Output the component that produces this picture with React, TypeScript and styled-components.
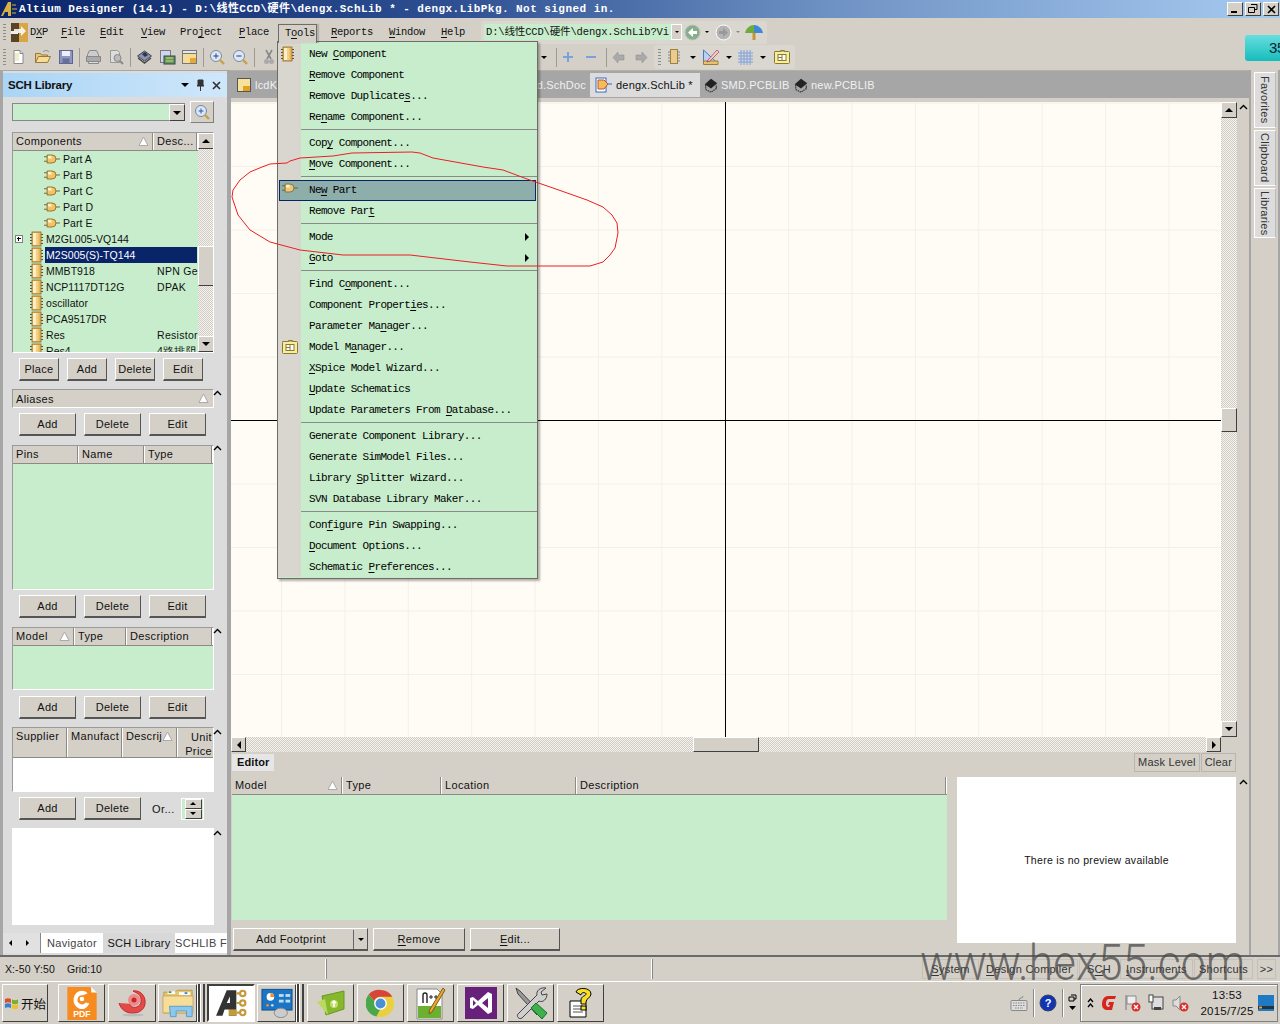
import React from "react";
import styled, { createGlobalStyle } from "styled-components";

const SANS = `"Liberation Sans", Arial, sans-serif`;
const MONO = `"Liberation Mono", "Noto Sans CJK SC", monospace`;
const FACE = "#d4d0c8";
const GREEN = "#c7edcc";
const GREY = "#a6a6a6";

const Global = createGlobalStyle`
  html, body { margin: 0; padding: 0; background: ${FACE}; }
  * { box-sizing: border-box; }
  u { text-underline-offset: 2px; }
`;

const Page = styled.div`
  width: 1280px; height: 1024px; position: relative; overflow: hidden;
  display: flex; flex-direction: column; background: ${FACE};
  font-family: ${SANS}; font-size: 11px; color: #111;
`;

/* ---------- title bar ---------- */
const TitleBar = styled.div`
  height: 18px; display: flex; align-items: center; flex: none;
  background: linear-gradient(90deg, #0a246a 0%, #2d4f92 35%, #6f92c4 65%, #a6caf0 100%);
`;
const TitleText = styled.span`
  margin-left: 1px; font: bold 11px/18px ${MONO}; color: #fff; letter-spacing: .45px; white-space: nowrap; flex: 1;
`;
const WinBtns = styled.div`display: flex; gap: 2px; padding: 0 1px 0 0;`;
const WinBtn = styled.div`
  width: 16px; height: 14px; background: ${FACE}; display: flex; align-items: center; justify-content: center;
  border: 1px solid; border-color: #fff #404040 #404040 #fff;
`;

/* ---------- menu bar & toolbar ---------- */
const MenuRow = styled.div`
  height: 26px; flex: none; display: flex; align-items: center; padding: 2px 0 0 3px; position: relative;
  font: 10.5px ${MONO}; letter-spacing: -.3px;
`;
const Grip = styled.div`
  width: 3px; height: 17px; flex: none;
  background: repeating-linear-gradient(180deg, #8f8c85 0 1px, transparent 1px 3px);
`;
const MenuItem = styled.span<{ $w: number }>`
  width: ${p => p.$w}px; height: 18px; line-height: 18px; flex: none; padding-left: 6px; white-space: nowrap;
`;
const DxpItem = styled(MenuItem)`padding-left: 2px;`;
const TopBtn = styled.span`
  width: 39px; height: 19px; line-height: 17px; flex: none; padding-left: 6px; align-self: flex-end; margin: 0 8px 1px 0;
  border: 1px solid #6f6c66; border-bottom: 0; background: ${FACE}; position: relative; z-index: 6;
  box-shadow: 2px 0 1px rgba(0,0,0,.15);
`;
const AddressGroup = styled.div`
  height: 23px; margin-left: 9px; width: 286px; flex: none; display: flex; align-items: center;
  background: #dad7d0; border-radius: 3px; padding-left: 3px;
`;
const AddressInput = styled.div`
  width: 187px; height: 16px; background: ${GREEN}; font: 10.5px/16px ${MONO}; letter-spacing: -.15px; padding-left: 2px;
  overflow: hidden; white-space: nowrap; flex: none;
`;
const ComboArrow = styled.div`
  width: 11px; height: 16px; background: ${FACE}; border: 1px solid #fff; display: flex; align-items: center; justify-content: center; flex: none;
`;
const Tri = styled.i<{ $dir?: "up" | "down" | "left" | "right"; $s?: number; $c?: string }>`
  display: inline-block; width: 0; height: 0; flex: none;
  ${p => {
    const s = p.$s ?? 3, c = p.$c ?? "#000";
    switch (p.$dir ?? "down") {
      case "up": return `border-left:${s}px solid transparent;border-right:${s}px solid transparent;border-bottom:${s}px solid ${c};`;
      case "left": return `border-top:${s}px solid transparent;border-bottom:${s}px solid transparent;border-right:${s}px solid ${c};`;
      case "right": return `border-top:${s}px solid transparent;border-bottom:${s}px solid transparent;border-left:${s}px solid ${c};`;
      default: return `border-left:${s}px solid transparent;border-right:${s}px solid transparent;border-top:${s}px solid ${c};`;
    }
  }}
`;
const ToolRow = styled.div`
  height: 26px; flex: none; display: flex; align-items: center; padding-left: 3px;
`;
const Gap = styled.span<{ $w: number }>`width: ${p => p.$w}px; flex: none; display: inline-block;`;
const Fill = styled.div`flex: 1;`;
const TSep = styled.span`
  width: 1px; height: 19px; background: #9e9b94; flex: none; margin: 0 5px;
`;
const ToolGroup = styled.div`
  height: 24px; width: 141px; display: flex; align-items: center; background: #dad7d0; border-radius: 3px; padding-left: 4px; flex: none;
`;
const Teal = styled.div`
  position: absolute; left: 1245px; top: 17px; width: 35px; height: 26px; border-radius: 3px 0 0 3px; overflow: hidden;
  background: linear-gradient(180deg, #67dede, #16bcbc); font: 15px/26px ${SANS}; padding-left: 24px; color: #123; z-index: 1;
`;

/* ---------- workspace ---------- */
const Workspace = styled.div`height: 885px; flex: none; display: flex; background: ${FACE};`;
const LeftDock = styled.aside`
  width: 231px; flex: none; display: flex; flex-direction: column;
  background: #dcdcdc; border-left: 3px solid ${GREY}; border-right: 4px solid ${GREY}; padding: 3px 0 0 0;
  box-shadow: inset 0 1px 0 ${GREY}; position: relative;
`;
const PanelHead = styled.div`
  height: 24px; flex: none; display: flex; align-items: center; padding: 0 6px 0 5px; gap: 7px;
  background: linear-gradient(90deg, #a9d5f6, #cfe7fb); font: bold 11.5px ${SANS}; letter-spacing: -.2px;
`;
const PanelTitle = styled.span`flex: 1;`;
const PanelBody = styled.div`padding: 3px 9px 0 9px; flex: 1; min-height: 0; display: flex; flex-direction: column; position: relative;`;
const SearchRow = styled.div`display: flex; align-items: center; height: 24px; gap: 5px; flex: none;`;
const SearchCombo = styled.div`
  width: 173px; height: 18px; background: ${GREEN}; border: 1px solid #888; border-right: 0; display: flex; justify-content: flex-end;
`;
const ComboBtn = styled.div`
  width: 16px; height: 17px; background: ${FACE}; display: flex; align-items: center; justify-content: center;
  border: 1px solid; border-color: #fff #404040 #404040 #fff;
`;
const IconBtn = styled.div`
  width: 24px; height: 22px; background: ${FACE}; display: flex; align-items: center; justify-content: center;
  border: 1px solid; border-color: #fff #808080 #808080 #fff;
`;
const TableBox = styled.div<{ $h: number; $mt: number; $bg?: string }>`
  width: 202px; height: ${p => p.$h}px; margin-top: ${p => p.$mt}px; flex: none; position: relative;
  background: ${p => p.$bg ?? GREEN}; border: 1px solid #fff; border-top-color: #9a9a9a; border-left-color: #9a9a9a;
  display: flex; flex-direction: column; overflow: hidden;
`;
const THead = styled.div<{ $h?: number }>`
  height: ${p => p.$h ?? 18}px; flex: none; display: flex; background: ${FACE};
  border-bottom: 1px solid #8d8a84;
  letter-spacing: .35px; font-size: 11px;
`;
const TH = styled.div<{ $w: number; $right?: boolean }>`
  width: ${p => p.$w}px; flex: none; padding: 0 0 0 3px; line-height: 17px; position: relative; overflow: hidden; white-space: pre-line;
  border-right: 1px solid #fff; box-shadow: inset -1px 0 0 #8d8a84; text-align: ${p => (p.$right ? "right" : "left")};
  ${p => p.$right ? "line-height: 14px; padding: 2px 2px 0 0; border-right: 0; box-shadow: none;" : ""}
`;
const SortMark = styled.svg`position: absolute; right: 4px; top: 3px;`;
const TreeWrap = styled.div`position: relative; flex: 1; overflow: hidden; display: flex;`;
const TreeList = styled.div`width: 185px; flex: none; overflow: hidden;`;
const VBar = styled.div`
  width: 16px; flex: none; display: flex; flex-direction: column;
  background: repeating-conic-gradient(#d0ccc4 0 25%, #f4f3f0 0 50%) 0 0 / 2px 2px;
`;
const ArrowCell = styled.div<{ $size?: number }>`
  width: ${p => p.$size ?? 16}px; height: ${p => p.$size ?? 16}px; flex: none; background: ${FACE}; display: flex; align-items: center; justify-content: center;
  border: 1px solid; border-color: #fff #404040 #404040 #fff;
`;
const VThumb = styled.div<{ $top: number; $h: number }>`
  width: 16px; height: ${p => p.$h}px; margin-top: ${p => p.$top}px; flex: none; background: ${FACE};
  border: 1px solid; border-color: #fff #404040 #404040 #fff;
`;
const TreeRow = styled.div<{ $indent: number }>`
  height: 16px; display: flex; align-items: center; padding-left: ${p => p.$indent}px; position: relative;
  white-space: nowrap; font-size: 10.5px; letter-spacing: .05px;
`;
const RowLabel = styled.span<{ $sel?: boolean; $w: number }>`
  width: ${p => p.$w}px; flex: none; height: 16px; line-height: 16px; padding-left: 1px; margin-left: 2px;
  ${p => (p.$sel ? "background:#0a246a;color:#fff;" : "")}
`;
const RowDesc = styled.span`position: absolute; left: 144px; top: 0; line-height: 16px; letter-spacing: .3px; width: 41px; overflow: hidden;`;
const Expander = styled.span`
  position: absolute; left: 2px; top: 4px; width: 8px; height: 8px; border: 1px solid #808080; background: #fff;
  &::before { content: ""; position: absolute; left: 1px; top: 2px; width: 4px; height: 1px; background: #000; }
  &::after { content: ""; position: absolute; left: 2px; top: 1px; width: 1px; height: 4px; background: #000; }
`;
const BtnRow = styled.div<{ $mt: number }>`
  display: flex; margin-top: ${p => p.$mt}px; gap: 8px; padding-left: 7px; flex: none; align-items: center; height: 23px;
`;
const Btn = styled.div<{ $w: number; $h?: number }>`
  width: ${p => p.$w}px; height: ${p => p.$h ?? 23}px; flex: none; background: ${FACE}; text-align: center;
  line-height: ${p => (p.$h ?? 23) - 3}px; font-size: 11px; letter-spacing: .3px;
  border-top: 1px solid #fff; border-left: 1px solid #fff; border-right: 1px solid #555; border-bottom: 2px solid #555; white-space: nowrap;
`;
const SplitBtn = styled(Btn)`display: flex; padding-left: 22px; align-items: center; justify-content: space-between;`;
const SplitArrow = styled.span`width: 14px; height: 19px; border-left: 1px solid #666; display: flex; align-items: center; justify-content: center;`;
const Aliases = styled.div`
  width: 202px; height: 19px; margin-top: 8px; flex: none; background: ${FACE}; border: 1px solid #fff; border-top-color: #9a9a9a; border-left-color: #9a9a9a;
  padding-left: 3px; line-height: 18px; letter-spacing: .35px; position: relative;
`;
const Chevron = styled.svg<{ $l: number; $t: number }>`position: absolute; left: ${p => p.$l}px; top: ${p => p.$t}px;`;
const OrderLabel = styled.span`margin-left: 3px; letter-spacing: .4px;`;
const Stepper = styled.div`
  width: 23px; height: 22px; background: ${GREEN}; border: 1px solid #fff; margin-left: -2px; padding-left: 3px; display: flex; flex-direction: column;
`;
const StepCell = styled.div`
  width: 17px; height: 10px; background: ${FACE}; display: flex; align-items: center; justify-content: center; border: 1px solid; border-color: #fff #404040 #404040 #fff;
`;
const PreviewSmall = styled.div`width: 202px; height: 97px; margin-top: 8px; flex: none; background: #fff;`;
const DockTabs = styled.div`
  height: 20px; margin-top: 8px; flex: none; display: flex; align-items: stretch; width: 224px; margin-left: -9px;
  background: #e1e1e1; overflow: hidden; font-size: 11px; letter-spacing: .3px;
`;
const DockNav = styled.div`width: 38px; flex: none; display: flex; align-items: center; gap: 14px; padding-left: 6px; border-right: 1px solid #888;`;
const DockTab = styled.div<{ $w: number; $on?: boolean }>`
  width: ${p => p.$w}px; flex: none; text-align: center; line-height: 20px; white-space: nowrap; overflow: hidden;
  background: ${p => (p.$on ? "#d8d8d8" : "#fff")}; color: ${p => (p.$on ? "#111" : "#444")};
`;

/* center */
const Center = styled.main`width: 1018px; flex: none; display: flex; flex-direction: column; position: relative;`;
const TabStrip = styled.div`
  height: 28px; flex: none; background: ${GREY}; display: flex; align-items: flex-end; font-size: 11px; color: #f1f1f1; letter-spacing: .2px;
  border-top: 1px solid #b4b1aa; padding-bottom: 1px;
`;
const DocTab = styled.div<{ $w: number; $on?: boolean; $ml?: number; $end?: boolean }>`
  width: ${p => p.$w}px; height: 24px; flex: none; display: flex; align-items: center; gap: 3px; padding-left: 5px; margin-left: ${p => p.$ml ?? 0}px; white-space: nowrap; overflow: hidden;
  ${p => (p.$on ? "background:#dcdcdc;color:#111;" : "")}
  ${p => (p.$end ? "justify-content:flex-end;padding-right:2px;" : "")}
  svg { flex: none; }
`;
const FirstTab = styled(DocTab)`padding-left: 6px; gap: 4px;`;
const PcbTab = styled(DocTab)`padding-left: 3px; gap: 2px;`;
const CanvasRow = styled.div`height: 635px; flex: none; display: flex; margin-top: 4px;`;
const Canvas = styled.div`
  flex: none; width: 990px; height: 635px; position: relative; overflow: hidden; background-color: #fffcf5;
  background-image:
    linear-gradient(90deg, #f3f0e8 1px, transparent 1px),
    linear-gradient(180deg, #f3f0e8 1px, transparent 1px);
  background-size: 63.4px 63.5px;
  background-position: 50px 0.5px;
`;
const CrossV = styled.div`position: absolute; left: 494px; top: 0; bottom: 0; width: 1px; background: #000;`;
const CrossH = styled.div`position: absolute; top: 318px; left: 0; right: 0; height: 1px; background: #000;`;
const HBarRow = styled.div`height: 15px; width: 990px; flex: none; display: flex; align-items: center;
  background: repeating-conic-gradient(#d0ccc4 0 25%, #f4f3f0 0 50%) 0 0 / 2px 2px;
`;
const HThumb = styled.div`width: 66px; height: 15px; margin-left: 447px; background: ${FACE}; border: 1px solid; border-color: #fff #404040 #404040 #fff; flex: none;`;
const EditorHead = styled.div`height: 19px; margin-top: 1px; flex: none; display: flex; align-items: center; justify-content: space-between; padding: 0 13px 0 1px;`;
const EditorTitle = styled.span`background: #e6e6e6; font-weight: bold; padding: 0 5px; height: 17px; line-height: 17px; letter-spacing: .1px;`;
const EditorTools = styled.div`display: flex; gap: 1px; height: 19px; letter-spacing: .2px; color: #333;`;
const ToolBtn = styled.div`border: 1px solid #bab6ae; padding: 0 3px; line-height: 17px;`;
const EditorBody = styled.div`display: flex; margin-top: 5px; height: 174px; flex: none; padding-left: 1px; gap: 10px;`;
const ModelColumn = styled.div`width: 715px; flex: none; display: flex; flex-direction: column;`;
const ModelTable = styled.div`height: 143px; flex: none; background: ${GREEN}; display: flex; flex-direction: column;`;
const PreviewBox = styled.div`
  width: 279px; height: 166px; flex: none; background: #fff; display: flex; align-items: center; justify-content: center; font-size: 10.5px; letter-spacing: .3px; padding-bottom: 1px;
`;
const EditorButtons = styled.div`display: flex; gap: 5px; margin: 8px 0 0 1px;`;

/* right rail */
const Rail = styled.aside`
  flex: 1; display: flex; flex-direction: column; padding: 2px 0 0 3px; border-left: 2px solid ${GREY}; border-right: 2px solid ${GREY}; align-items: flex-start; background: ${FACE};
`;
const RailTab = styled.div<{ $h: number }>`
  width: 22px; height: ${p => p.$h}px; flex: none; writing-mode: vertical-rl; background: #dcdcdc; border: 1px solid #fff; border-right-color: #bbb;
  text-align: center; font-size: 11px; letter-spacing: .25px; color: #333; margin-bottom: 2px; line-height: 20px; white-space: nowrap;
`;

/* status bar */
const StatusBar = styled.footer`
  height: 27px; flex: none; border-top: 2px solid #6a6a6a; box-shadow: inset 0 -1px 0 #fff; display: flex; align-items: center; position: relative; font-size: 10.5px; letter-spacing: .1px;
  padding-left: 5px; padding-bottom: 1px;
`;
const StatusCell = styled.span<{ $w: number; $line?: boolean }>`
  width: ${p => p.$w}px; height: 20px; line-height: 20px; flex: none; ${p => (p.$line ? "border-right: 1px solid #fff; box-shadow: 1px 0 0 #888;" : "")}
`;
const PanelBtns = styled.div`display: flex; gap: 1px; margin-left: 270px; height: 20px; flex: none;`;
const PanelBtn = styled.div<{ $w: number; $ml?: number }>`
  width: ${p => p.$w}px; flex: none; text-align: center; border: 1px solid #c4c0b8; line-height: 18px; font-size: 11px; letter-spacing: .3px; white-space: nowrap; color: #333;
  margin-left: ${p => p.$ml ?? 0}px;
`;
const Watermark = styled.div`
  position: absolute; left: 920px; top: 933px; font: 300 50px/60px Roboto, ${SANS}; color: rgba(70,70,70,.72); white-space: nowrap; z-index: 8; pointer-events: none;
  transform: scaleX(.89); transform-origin: left top;
`;

/* taskbar */
const Taskbar = styled.div`
  height: 42px; flex: none; display: flex; align-items: center; padding: 0 2px 0 2px;
`;
const StartBtn = styled.div`
  width: 46px; height: 38px; flex: none; display: flex; align-items: center; justify-content: center; gap: 1px;
  border: 1px solid; border-color: #fff #404040 #404040 #fff; font: 12.5px "Noto Sans CJK SC", sans-serif; background: ${FACE};
`;
const TaskBtn = styled.div<{ $on?: boolean; $ml?: number; $w?: number }>`
  width: ${p => p.$w ?? 48}px; height: 38px; flex: none; display: flex; align-items: center; justify-content: center; margin-left: ${p => p.$ml ?? 2}px; position: relative;
  ${p => (p.$on ? "background:#fff;border:2px solid;border-color:#404040 #fff #fff #404040;" : "border:1px solid;border-color:#fff #404040 #404040 #fff;")}
  svg { flex: none; }
`;
const Stack = styled.span`width: 8px; height: 38px; flex: none; border-left: 1px solid #fff; border-right: 2px solid #404040; box-shadow: inset 2px 0 0 #404040, inset 3px 0 0 #fff;`;
const TrayLeft = styled.div`margin-left: auto; display: flex; align-items: center; height: 38px; gap: 5px; padding-right: 3px;`;
const TrayDiv = styled.span`width: 1px; height: 28px; background: #888; box-shadow: 1px 0 0 #fff;`;
const Tray = styled.div`
  width: 198px; height: 38px; flex: none; border: 1px solid #808080; box-shadow: inset 1px 1px 0 #fff; display: flex; align-items: center; gap: 7px; padding-left: 6px;
`;
const Clock = styled.div`width: 54px; text-align: center; line-height: 16px; font-size: 11.5px; letter-spacing: .2px; flex: none; margin: 0 -3px 0 4px; white-space: nowrap;`;

/* menu */
const Menu = styled.nav`
  position: absolute; left: 277px; top: 41px; width: 261px; z-index: 5; background: ${GREEN}; border: 1px solid #6f6c66;
  box-shadow: 2px 2px 2px rgba(0,0,0,.3); padding: 2px 0 0 0; display: flex; flex-direction: column;
`;
const Gutter = styled.div`position: absolute; left: 0; top: 0; bottom: 1px; width: 23px; background: #d9d6cf;`;
const MenuRowItem = styled.div<{ $hot?: boolean }>`
  height: 21px; padding-left: 31px; position: relative; font: 11px/21px ${MONO}; letter-spacing: -.65px; color: #000; white-space: pre;
  ${p => (p.$hot ? "background:#8eaeac; outline:1px solid #0a2463; outline-offset:-1px; margin: 0 1px; padding-left:30px;" : "")}
`;
const MenuIcon = styled.span`position: absolute; left: 3px; top: 2px; display: flex;`;
const SubArrow = styled.span`position: absolute; right: 8px; top: 6px; display: flex;`;
const MenuSep = styled.div`height: 5px; padding-bottom: 2px; margin-left: 23px; display: flex; align-items: center; &::before { content: ""; flex: 1; height: 1px; background: #8a8a8a; }`;
const Scribble = styled.svg`position: absolute; left: 0; top: 0; z-index: 7; pointer-events: none;`;

/* ---------- icons ---------- */
const Chip = () => (
  <svg width="13" height="16" viewBox="0 0 13 16">
    <path d="M0 3.500h13M0 6.500h13M0 9.500h13M0 12.500h13" stroke="#5c5030" />
    <rect x="2" y="1" width="9" height="14" fill="#e9b45a" stroke="#8a6a2a" strokeWidth=".8" />
    <rect x="3" y="2" width="3.500" height="12" fill="#fdf0c4" />
    <rect x="6.500" y="2" width="2" height="12" fill="#f5cf85" />
  </svg>
);
const PartIcon = ({ dark }: { dark?: boolean }) => (
  <svg width="16" height="12" viewBox="0 0 18 12">
    <path d="M0 3.500h4M0 8.500h4M13 6h5" stroke="#6b5a2a" />
    <path d="M3.500 1.500h5.500a4.500 4.500 0 0 1 0 9H3.500z" fill={dark ? "#e8c880" : "#f3c366"} stroke="#8a6a2a" />
    <path d="M4.500 2.500h4v3h-4z" fill="#fff2c8" />
  </svg>
);
const NotePad = () => (
  <svg width="18" height="16" viewBox="0 0 18 16">
    <rect x="1.500" y="2.500" width="15" height="12" rx="1" fill="#f7eda0" stroke="#8a7a30" />
    <path d="M1.500 2.500h6v-1h4v1" fill="#f7eda0" stroke="#8a7a30" />
    <rect x="5" y="5.500" width="8" height="6" fill="#fff" stroke="#8a7a30" />
    <path d="M9 5.500v6M5 8.500h4" stroke="#8a7a30" />
  </svg>
);
const Doc = () => <svg width="14" height="16" viewBox="0 0 14 16"><path d="M3 1.500h6l3 3v10H3z" fill="#fff" stroke="#8a8a8a" /><path d="M9 1.500v3h3" fill="#ddd" stroke="#8a8a8a" /><path d="M4 4h4v8H4z" fill="#f3eccb" /></svg>;
const Open = () => <svg width="18" height="16" viewBox="0 0 18 16"><path d="M1.500 13.500v-9h5l1 1.500h6v2" fill="#e8c87a" stroke="#98793a" /><path d="M1.500 13.500l3-6h12l-3 6z" fill="#f6dc96" stroke="#98793a" /><path d="M9 3c2-2 4-2 6 0" stroke="#888" fill="none" /></svg>;
const Save = () => <svg width="16" height="16" viewBox="0 0 16 16"><rect x="1.500" y="1.500" width="13" height="13" fill="#8e97c0" stroke="#5d6590" /><rect x="4" y="2" width="8" height="5" fill="#eef" /><rect x="4.500" y="9.500" width="7" height="5" fill="#666e99" /></svg>;
const Print = () => <svg width="17" height="16" viewBox="0 0 17 16" fill="#aaa"><path d="M4.500 1.500h7l2 4v3h-11v-3z" fill="#ccc" stroke="#888" /><path d="M1.500 7.500h14v5h-14z" stroke="#888" /><path d="M3.500 12.500h10v2h-10z" fill="#ddd" stroke="#888" /></svg>;
const Preview = () => <svg width="17" height="16" viewBox="0 0 17 16"><path d="M2.500 1.500h7l2 2v10h-9z" fill="#ddd" stroke="#999" /><circle cx="9.500" cy="9" r="3.500" fill="#bbb" stroke="#888" /><path d="M12 12l3 3" stroke="#888" strokeWidth="2" /></svg>;
const Layers = () => <svg width="17" height="16" viewBox="0 0 17 16"><path d="M8.500 2l7 5-7 5-7-5z" fill="#8494b8" stroke="#444" /><path d="M2 9l6.500 5 6.500-5" fill="none" stroke="#444" strokeWidth="1.400" /><path d="M6 5l3-2 3 3-3 2z" fill="#334" /></svg>;
const Board = () => <svg width="17" height="16" viewBox="0 0 17 16"><rect x="1.500" y="1.500" width="10" height="12" fill="#cfd7e6" stroke="#778" /><rect x="5" y="7" width="11" height="8" fill="#5d9a5a" stroke="#345" /><path d="M7 9h7M7 12h7" stroke="#e5d070" /></svg>;
const Sheet = () => <svg width="17" height="16" viewBox="0 0 17 16"><rect x="1.500" y="1.500" width="14" height="13" fill="#f6dc96" stroke="#777" /><rect x="1.500" y="1.500" width="14" height="3" fill="#e6e6e6" stroke="#777" /><rect x="9" y="9" width="6" height="5" fill="#e6a830" /></svg>;
const Zoom = ({ plus = true }: { plus?: boolean }) => (
  <svg width="17" height="17" viewBox="0 0 17 17">
    <circle cx="7" cy="7" r="5.500" fill="#dfe7f2" stroke="#7a8aa2" />
    <path d={plus ? "M4.500 7h5M7 4.500v5" : "M4.500 7h5"} stroke="#4a6fb0" strokeWidth="1.400" />
    <path d="M11 11l4 4" stroke="#c9a13e" strokeWidth="2.400" />
  </svg>
);
const Scissors = () => <svg width="12" height="16" viewBox="0 0 12 16"><path d="M3 1l5 9M9 1L4 10" stroke="#888" strokeWidth="1.600" /><circle cx="3.500" cy="12.500" r="2.500" fill="#aaa" /><circle cx="8.500" cy="12.500" r="2.500" fill="#aaa" /></svg>;
const Plus = ({ minus }: { minus?: boolean }) => <svg width="12" height="12" viewBox="0 0 12 12"><path d={minus ? "M1 6h10" : "M1 6h10M6 1v10"} stroke="#7ba2d8" strokeWidth="2" /></svg>;
const ArrowBtn = ({ right }: { right?: boolean }) => <svg width="13" height="11" viewBox="0 0 13 11"><path d={right ? "M1 3h6V0l5 5.500L7 11V8H1z" : "M12 3H6V0L1 5.500 6 11V8h6z"} fill="#aaa" stroke="#8a8a8a" strokeWidth=".5" /></svg>;
const ChipTool = () => <svg width="14" height="18" viewBox="0 0 14 18"><path d="M1 4h3M1 7h3M1 10h3M1 13h3M10 4h3M10 7h3M10 10h3M10 13h3" stroke="#888" /><rect x="3.500" y="1.500" width="7" height="14" fill="#eccb8c" stroke="#9a8244" /></svg>;
const Draft = () => <svg width="18" height="18" viewBox="0 0 18 18"><path d="M1.500 2v13.500H16z" fill="#bcd0f0" stroke="#4878c8" /><path d="M1.500 13h14.500v3.500H1.500z" fill="#e5c46e" stroke="#a08030" /><path d="M6 12l9-10 2 2-9 9-3 1z" fill="#e8d8a0" stroke="#b08" strokeWidth=".6" /></svg>;
const Grid = () => <svg width="15" height="15" viewBox="0 0 15 15"><path d="M3 0v15M6 0v15M9 0v15M12 0v15M0 3h15M0 6h15M0 9h15M0 12h15" stroke="#7da0dc" /></svg>;
const Nav = ({ off, right }: { off?: boolean; right?: boolean }) => (
  <svg width="17" height="17" viewBox="0 0 17 17">
    <circle cx="8.500" cy="8.500" r="7.500" fill={off ? "#b4b4b4" : "#8aad8e"} stroke={off ? "#fff" : "#b2c7b5"} />
    <path d={right ? "M4 7h4V4l5 4.500L8 13v-3H4z" : "M13 7H9V4L4 8.500 9 13v-3h4z"} fill={off ? "#999" : "#fff"} />
  </svg>
);
const Umbrella = () => <svg width="20" height="18" viewBox="0 0 20 18"><path d="M10 3v14" stroke="#c6952f" strokeWidth="3" /><path d="M1 10c1-5 5-8 9-8v8z" fill="#6faa3c" /><path d="M19 10c-1-5-5-8-9-8v8z" fill="#3f88d6" /></svg>;
const DxpLogo = () => <svg width="17" height="19" viewBox="0 0 17 19"><rect x="0" y="0" width="17" height="19" fill="#5a4426" /><rect x="8" y="0" width="9" height="19" fill="#d8a649" /><path d="M3 6h7v-3l5 5-5 5v-3H3z" fill="#fff" opacity=".85" /><path d="M0 8h7v3H0z" fill="#eee" /></svg>;
const PcbIcon = () => <svg width="16" height="17" viewBox="0 0 18 17"><path d="M9 1l7 5-7 6-7-5z" fill="#222" /><path d="M3 8v5l6 3 6-4V8" fill="none" stroke="#333" strokeWidth="1.500" strokeDasharray="1.500 1" /></svg>;
const SchDocIcon = () => <svg width="14" height="14" viewBox="0 0 14 14"><rect x=".5" y=".5" width="13" height="13" fill="#f6e29a" stroke="#555" /><rect x="6" y="8" width="7" height="5" fill="#e6a020" /></svg>;
const SchLibIcon = () => <svg width="18" height="16" viewBox="0 0 18 16"><rect x="1" y="1" width="10" height="14" fill="#fff" stroke="#2f6dcc" /><path d="M3 3h6l4 4-4 5H3z" fill="#f3bd5e" stroke="#c0542a" /><path d="M13 7h4" stroke="#2f6dcc" /></svg>;
const MagBtn = () => <svg width="16" height="16" viewBox="0 0 16 16"><circle cx="7" cy="7" r="5.500" fill="#dbe6f6" stroke="#7387aa" /><path d="M4.500 7h5M7 4.500v5" stroke="#2f5fa8" /><path d="M11 11l4 4" stroke="#c9a13e" strokeWidth="2.400" /></svg>;
const Sort = () => <SortMark width="11" height="11" viewBox="0 0 11 11"><path d="M5.500 1L10 9.500H1z" fill="#fff" stroke="#aaa" /></SortMark>;
const Chev = ({ l, t }: { l: number; t: number }) => <Chevron $l={l} $t={t} width="9" height="7" viewBox="0 0 9 7"><path d="M1 5l3.500-3.500L8 5" fill="none" stroke="#000" strokeWidth="1.400" /></Chevron>;
const AppLogo = () => <svg width="18" height="16" viewBox="0 0 18 16"><path d="M1 15L8 1h3v14H8v-4H5l-2 4z" fill="#d8b040" /><path d="M12 4h4M12 8h5M12 12h4" stroke="#d8b040" /></svg>;

const Win = () => (
  <svg width="16" height="15" viewBox="0 0 16 15">
    <path d="M1 3c2-1 4-1 6 0v4c-2-1-4-1-6 0z" fill="#d9502c" /><path d="M8 3.500c2 1 4 1 6 0v4c-2 1-4 1-6 0z" fill="#77b02c" />
    <path d="M1 8c2-1 4-1 6 0v4c-2-1-4-1-6 0z" fill="#3a80d0" /><path d="M8 8.500c2 1 4 1 6 0v4c-2 1-4 1-6 0z" fill="#f2c020" />
  </svg>
);
const FoxitPdf = () => (
  <svg width="32" height="33" viewBox="0 0 32 36">
    <path d="M0 0h25l7 7v29H0z" fill="#f68b1f" /><path d="M26 0l6 6h-6z" fill="#fff" />
    <path d="M16 4a9 10 0 1 0 8 14l-4-1a5 5 0 1 1-3-8l5-2c-1-2-3-3-6-3z" fill="#fff" />
    <circle cx="16" cy="13" r="2.500" fill="#fff" />
    <text x="16" y="33" textAnchor="middle" fill="#fff" fontSize="9.500" fontWeight="bold" fontFamily="Liberation Sans">PDF</text>
  </svg>
);
const Snail = () => (
  <svg width="30" height="28" viewBox="0 0 30 28">
    <path d="M2 14c2 7 8 11 16 10 7-1 11-6 10-13C27 5 22 1 16 2c3 2 9 3 8 11-1 5-7 7-10 4-3-4 1-7 4-5 1 2 0 4-2 3" fill="#e24a4a" stroke="#c42a2a" />
    <ellipse cx="17" cy="11" rx="6" ry="6" fill="#ef8a8a" /><circle cx="17" cy="11" r="2.500" fill="#c42a2a" />
    <ellipse cx="16" cy="26" rx="11" ry="1.400" fill="#bbb" />
  </svg>
);
const Explorer = () => (
  <svg width="32" height="30" viewBox="0 0 34 31">
    <path d="M2 4h12l2-2h16v24H2z" fill="#e8c46c" stroke="#b89a50" />
    <rect x="6" y="3" width="8" height="3" fill="#fff" /><rect x="7" y="3" width="3" height="2" fill="#3aa04a" /><rect x="18" y="4" width="12" height="3" fill="#fff" /><rect x="24" y="4" width="3" height="2" fill="#3a8ad0" />
    <path d="M1 8h32v18H1z" fill="#f6dd98" stroke="#c6a860" />
    <path d="M8 19h24v11h-6v-6H15v6H9z" fill="#8cc8ec" stroke="#5a9cc8" />
  </svg>
);
const AltiumA = () => (
  <svg width="32" height="28" viewBox="0 0 30 26">
    <path d="M1 25L11 1h9v24h-7v-6H9l-2 6z" fill="#333" /><path d="M13 19h7v6h-7z" fill="#c59a3a" /><path d="M11 13h3V7z" fill="#fff" />
    <g fill="none" stroke="#c59a3a" strokeWidth="2"><circle cx="26" cy="4" r="2.500" /><circle cx="26" cy="13" r="2.500" /><circle cx="26" cy="22" r="2.500" /></g>
    <path d="M20 4h3M20 13h3M20 22h3" stroke="#c59a3a" strokeWidth="2" />
  </svg>
);
const Control = () => (
  <svg width="32" height="30" viewBox="0 0 34 31">
    <rect x="1" y="1" width="32" height="22" fill="#1c74c4" stroke="#0d4f90" /><circle cx="10" cy="9" r="4" fill="#fff" /><path d="M10 9V5a4 4 0 0 1 4 4z" fill="#f09020" />
    <rect x="19" y="6" width="5" height="3" fill="#bde" /><rect x="26" y="6" width="5" height="3" fill="#bde" /><rect x="19" y="12" width="5" height="3" fill="#bde" /><rect x="26" y="12" width="5" height="3" fill="#bde" />
    <circle cx="7" cy="18" r="1.400" fill="#f09020" /><circle cx="12" cy="18" r="1.400" fill="#bde" />
    <ellipse cx="21" cy="26" rx="7" ry="5" fill="#ccc" stroke="#888" />
  </svg>
);
const GreenFolder = () => (
  <svg width="30" height="27" viewBox="0 0 30 27">
    <path d="M6 6l22-5v18L10 25z" fill="#86b82e" stroke="#6a9820" /><path d="M1 12l8-3 3 16z" fill="#bcd860" />
    <circle cx="18" cy="14" r="4" fill="#c5dd70" /><path d="M18 11v6M16 13l2-2 2 2" stroke="#fff" strokeWidth="1.500" fill="none" />
  </svg>
);
const ChromeIcon = () => (
  <svg width="29" height="29" viewBox="0 0 32 32">
    <circle cx="16" cy="16" r="15" fill="#e8d040" />
    <path d="M16 1a15 15 0 0 1 13 7.500H16a7.500 7.500 0 0 0-7 4.600L3 6a15 15 0 0 1 13-5z" fill="#d8443a" />
    <path d="M3 6a15 15 0 0 0 8.500 24.300l5-9.500a7.500 7.500 0 0 1-7.500-7.700z" fill="#4aa84a" />
    <circle cx="16" cy="16" r="7" fill="#fff" /><circle cx="16" cy="16" r="5.500" fill="#4a90d8" />
  </svg>
);
const NotePP = () => (
  <svg width="30" height="34" viewBox="0 0 30 34">
    <path d="M1 3h20l5 5v25H1z" fill="#fff" stroke="#888" />
    <path d="M2 20h23v12H2z" fill="#6cb030" />
    <path d="M7 17V9a2 2 0 0 1 4 0v8" fill="none" stroke="#222" strokeWidth="1.400" />
    <path d="M13 11h4M15 9v4M18 11h4M20 9v4" stroke="#222" />
    <path d="M27 2l2 2-13 22-3 2 .5-4z" fill="#e8a830" stroke="#805a18" />
  </svg>
);
const VsIcon = () => (
  <svg width="32" height="32" viewBox="0 0 32 32">
    <rect width="32" height="32" fill="#68217a" />
    <path d="M23 5l4 2v18l-4 2-10-9-5 4-3-1V11l3-1 5 4zM8 13v6l3-3zM23 11l-6 5 6 5z" fill="#fff" fillRule="evenodd" />
  </svg>
);
const ToolsIcon = () => (
  <svg width="34" height="34" viewBox="0 0 34 34">
    <path d="M2 2l4 3 20 21-3 3L4 8z" fill="#999" stroke="#444" />
    <path d="M4 28L23 9c-1-4 3-8 9-7l-5 4 1 3 5-1c0 5-4 9-8 7L8 32c-3 2-6-2-4-4z" fill="#cfcfcf" stroke="#444" />
    <path d="M17 22l5-5 11 10-5 6z" fill="#3eb049" stroke="#17702a" />
  </svg>
);
const HelpIcon = () => (
  <svg width="24" height="34" viewBox="0 0 24 34">
    <path d="M1 15h13l3 3v13H1z" fill="#fff" stroke="#000" /><path d="M4 20h10M4 23h10M4 26h10" stroke="#555" />
    <path d="M7 6c1-5 15-5 15 2 0 4-5 4-5 8v2h-5v-4c0-4 5-4 5-6 0-2-5-2-5 1z" fill="#f8e020" stroke="#000" /><rect x="12" y="20" width="5" height="4" fill="#f8e020" stroke="#000" />
  </svg>
);
const KeyboardIcon = () => <svg width="18" height="17" viewBox="0 0 18 17"><rect x="1" y="5.500" width="16" height="10" rx="1" fill="#ddd" stroke="#888" /><path d="M3 8h12M3 10.500h12M5 13h8" stroke="#888" strokeDasharray="1.500 1" /><path d="M9 5c0-3 4-1 4-4" fill="none" stroke="#888" /></svg>;
const HelpCircle = () => <svg width="18" height="18" viewBox="0 0 18 18"><circle cx="9" cy="9" r="8" fill="#1034b8" stroke="#445" /><text x="9" y="13" fontSize="11" textAnchor="middle" fontWeight="bold" fill="#fff" fontFamily="Liberation Sans">?</text></svg>;
const RestoreIcon = () => <svg width="9" height="18" viewBox="0 0 9 18"><path d="M3 1h5v4H6M1 3h5v4H1z" fill="none" stroke="#000" /><path d="M1 12h7l-3.500 4z" fill="#000" /></svg>;
const RedG = () => <svg width="16" height="16" viewBox="0 0 16 16"><path d="M15 1H7C3 1 1 5 1 9s2 6 6 6h4l2-8H8l-1 3h2l-1 2C5 12 5 9 5 8c0-2 1-4 3-4h6z" fill="#d8241c" /></svg>;
const RedX = () => <g><circle cx="12" cy="13" r="4.500" fill="#d8302a" /><path d="M10 11l4 4M14 11l-4 4" stroke="#fff" strokeWidth="1.400" /></g>;
const FlagX = () => <svg width="17" height="18" viewBox="0 0 17 18"><path d="M2 1v15" stroke="#777" /><path d="M3 2h9v8H3z" fill="#eee" stroke="#888" /><RedX /></svg>;
const NetX = () => <svg width="17" height="18" viewBox="0 0 17 18"><rect x="4" y="3" width="11" height="12" fill="#ddd" stroke="#444" /><rect x="1" y="1" width="4" height="7" fill="#fff" stroke="#444" /><rect x="6" y="13" width="7" height="3" fill="#444" /></svg>;
const SpeakerX = () => <svg width="17" height="18" viewBox="0 0 17 18"><path d="M1 6h3l4-4v14l-4-4H1z" fill="#ddd" stroke="#888" /><RedX /></svg>;
const Desktop = () => <svg width="16" height="16" viewBox="0 0 16 16"><rect width="16" height="16" fill="#1f7ac4" /><rect y="11" width="16" height="3" fill="#26333f" /><rect x="1" y="11.500" width="3" height="2" fill="#e8a030" /></svg>;

type R = { t: string; u?: number; icon?: React.ReactNode; sub?: boolean; hot?: boolean } | "sep";
const rows: R[] = [
  { t: "New Component", u: 4, icon: <Chip /> },
  { t: "Remove Component", u: 0 },
  { t: "Remove Duplicates...", u: 16 },
  { t: "Rename Component...", u: 2 },
  "sep",
  { t: "Copy Component...", u: 3 },
  { t: "Move Component...", u: 0 },
  "sep",
  { t: "New Part", u: 2, icon: <PartIcon dark />, hot: true },
  { t: "Remove Part", u: 10 },
  "sep",
  { t: "Mode", sub: true },
  { t: "Goto", u: 0, sub: true },
  "sep",
  { t: "Find Component...", u: 6 },
  { t: "Component Properties...", u: 17 },
  { t: "Parameter Manager...", u: 12 },
  { t: "Model Manager...", u: 7, icon: <NotePad /> },
  { t: "XSpice Model Wizard...", u: 0 },
  { t: "Update Schematics", u: 0 },
  { t: "Update Parameters From Database...", u: 23 },
  "sep",
  { t: "Generate Component Library..." },
  { t: "Generate SimModel Files..." },
  { t: "Library Splitter Wizard...", u: 8 },
  { t: "SVN Database Library Maker..." },
  "sep",
  { t: "Configure Pin Swapping...", u: 3 },
  { t: "Document Options...", u: 0 },
  { t: "Schematic Preferences...", u: 10 },
];
const Under = ({ t, u }: { t: string; u?: number }) =>
  u === undefined ? <>{t}</> : <>{t.slice(0, u)}<u>{t[u]}</u>{t.slice(u + 1)}</>;

const tree: { i: number; n: string; part?: boolean; ex?: boolean; sel?: boolean; d?: string }[] = [
  { i: 31, part: true, n: "Part A" }, { i: 31, part: true, n: "Part B" }, { i: 31, part: true, n: "Part C" },
  { i: 31, part: true, n: "Part D" }, { i: 31, part: true, n: "Part E" },
  { i: 17, n: "M2GL005-VQ144", ex: true }, { i: 17, n: "M2S005(S)-TQ144", sel: true },
  { i: 17, n: "MMBT918", d: "NPN Ge" }, { i: 17, n: "NCP1117DT12G", d: "DPAK" }, { i: 17, n: "oscillator" },
  { i: 17, n: "PCA9517DR" }, { i: 17, n: "Res", d: "Resistor" }, { i: 17, n: "Res4", d: "4路排阻" },
];

const scribble =
  "M232 197 L233 190 L240 180 L250 172 L262 167 L270 164 L287 163 L290 161 L300 158 L333 156 L352 153 L412 152 L420 153 L433 158 L483 167 L503 170 L527 179 L553 188 L587 200 L603 207 L612 215 L617 223 L618 233 L615 248 L610 255 L603 262 L590 266 L507 266 L470 262 L410 255 L343 255 L300 250 L270 242 L250 230 L238 215 Z";

export default function App() {
  return (
    <Page>
      <Global />
      <TitleBar>
        <AppLogo />
        <TitleText>Altium Designer (14.1) - D:\线性CCD\硬件\dengx.SchLib * - dengx.LibPkg. Not signed in.</TitleText>
        <WinBtns>
          <WinBtn><svg width="8" height="8"><rect x="0" y="6" width="6" height="2" /></svg></WinBtn>
          <WinBtn><svg width="10" height="10"><path d="M3 .5h6v5H7M.5 3.500h6v5h-6z" fill="none" stroke="#000" /></svg></WinBtn>
          <WinBtn><svg width="9" height="9"><path d="M1 1l7 7M8 1L1 8" stroke="#000" strokeWidth="1.600" /></svg></WinBtn>
        </WinBtns>
      </TitleBar>

      <MenuRow>
        <Grip />
        <Gap $w={5} />
        <DxpLogo />
        <DxpItem $w={27}>D<u>X</u>P</DxpItem>
        <MenuItem $w={39}><u>F</u>ile</MenuItem>
        <MenuItem $w={41}><u>E</u>dit</MenuItem>
        <MenuItem $w={39}><u>V</u>iew</MenuItem>
        <MenuItem $w={59}>Pro<u>j</u>ect</MenuItem>
        <MenuItem $w={45}><u>P</u>lace</MenuItem>
        <TopBtn>T<u>o</u>ols</TopBtn>
        <MenuItem $w={58}><u>R</u>eports</MenuItem>
        <MenuItem $w={52}><u>W</u>indow</MenuItem>
        <MenuItem $w={37}><u>H</u>elp</MenuItem>
        <AddressGroup>
          <AddressInput>D:\线性CCD\硬件\dengx.SchLib?Vi</AddressInput>
          <ComboArrow><Tri $s={2.5} /></ComboArrow>
          <Gap $w={2} /><Nav />
          <Gap $w={4} /><Tri $s={2.5} />
          <Gap $w={6} /><Nav off right />
          <Gap $w={4} /><Tri $s={2.5} $c="#888" />
          <Gap $w={4} /><Umbrella />
        </AddressGroup>
        <Teal>35</Teal>
      </MenuRow>

      <ToolRow>
        <Grip /><Gap $w={5} /><Doc /><Gap $w={9} /><Open /><Gap $w={6} /><Save />
        <TSep /><Print /><Gap $w={6} /><Preview />
        <TSep /><Layers /><Gap $w={6} /><Board /><Gap $w={5} /><Sheet />
        <TSep /><Zoom /><Gap $w={6} /><Zoom plus={false} />
        <TSep /><Gap $w={3} /><Scissors />
        <Gap $w={266} /><Tri $s={3} />
        <Gap $w={4} /><TSep /><Plus /><Gap $w={11} /><Plus minus />
        <Gap $w={4} /><TSep /><ArrowBtn /><Gap $w={10} /><ArrowBtn right />
        <Gap $w={6} />
        <ToolGroup>
          <Grip /><Gap $w={6} /><ChipTool /><Gap $w={9} /><Tri />
          <Gap $w={6} /><Draft /><Gap $w={6} /><Tri />
          <Gap $w={6} /><Grid /><Gap $w={7} /><Tri />
          <Gap $w={7} /><NotePad />
        </ToolGroup>
      </ToolRow>

      <Workspace>
        <LeftDock>
          <PanelHead>
            <PanelTitle>SCH Library</PanelTitle>
            <Tri $s={4} />
            <svg width="9" height="12" viewBox="0 0 9 12"><path d="M2 1h5v5l1 1H1l1-1zM4.500 7v5" fill="#333" stroke="#333" /></svg>
            <svg width="9" height="9" viewBox="0 0 9 9"><path d="M1 1l7 7M8 1L1 8" stroke="#333" strokeWidth="1.700" /></svg>
          </PanelHead>
          <PanelBody>
            <SearchRow>
              <SearchCombo><ComboBtn><Tri $s={4} /></ComboBtn></SearchCombo>
              <IconBtn><MagBtn /></IconBtn>
            </SearchRow>
            <TableBox $h={221} $mt={8}>
              <TreeWrap>
                <TreeList>
                  <THead>
                    <TH $w={141}>Components<Sort /></TH>
                    <TH $w={44}>Desc...</TH>
                  </THead>
                  {tree.map(r => (
                    <TreeRow key={r.n} $indent={r.i}>
                      {r.ex && <Expander />}
                      {r.part ? <PartIcon /> : <Chip />}
                      <RowLabel $sel={r.sel} $w={r.sel ? 152 : 95}>{r.n}</RowLabel>
                      {r.d && <RowDesc>{r.d}</RowDesc>}
                    </TreeRow>
                  ))}
                </TreeList>
                <VBar>
                  <ArrowCell><Tri $dir="up" $s={4} /></ArrowCell>
                  <VThumb $top={97} $h={40} />
                  <Fill />
                  <ArrowCell><Tri $s={4} /></ArrowCell>
                </VBar>
              </TreeWrap>
            </TableBox>
            <BtnRow $mt={5}>
              <Btn $w={40}>Place</Btn><Btn $w={40}>Add</Btn><Btn $w={40}>Delete</Btn><Btn $w={40}>Edit</Btn>
            </BtnRow>
            <Aliases>Aliases<Sort /></Aliases>
            <Chev l={210} t={293} />
            <BtnRow $mt={5}><Btn $w={57}>Add</Btn><Btn $w={57}>Delete</Btn><Btn $w={57}>Edit</Btn></BtnRow>
            <TableBox $h={145} $mt={9}>
              <THead><TH $w={66}>Pins</TH><TH $w={66}>Name</TH><TH $w={68}>Type</TH></THead>
            </TableBox>
            <Chev l={210} t={348} />
            <BtnRow $mt={5}><Btn $w={57}>Add</Btn><Btn $w={57}>Delete</Btn><Btn $w={57}>Edit</Btn></BtnRow>
            <TableBox $h={63} $mt={9}>
              <THead><TH $w={62}>Model<Sort /></TH><TH $w={52}>Type</TH><TH $w={86}>Description</TH></THead>
            </TableBox>
            <Chev l={210} t={531} />
            <BtnRow $mt={6}><Btn $w={57}>Add</Btn><Btn $w={57}>Delete</Btn><Btn $w={57}>Edit</Btn></BtnRow>
            <TableBox $h={65} $mt={8} $bg="#fff">
              <THead $h={30}>
                <TH $w={55}>Supplier</TH><TH $w={55}>Manufact</TH><TH $w={55}>Descrij<Sort /></TH><TH $w={36} $right>{"Unit\nPrice"}</TH>
              </THead>
            </TableBox>
            <Chev l={210} t={632} />
            <BtnRow $mt={5}>
              <Btn $w={57}>Add</Btn><Btn $w={57}>Delete</Btn>
              <OrderLabel>Or...</OrderLabel>
              <Stepper><StepCell><Tri $dir="up" $s={3} /></StepCell><StepCell><Tri $s={3} /></StepCell></Stepper>
            </BtnRow>
            <PreviewSmall />
            <Chev l={210} t={733} />
            <DockTabs>
              <DockNav><Tri $dir="left" $s={3} /><Tri $dir="right" $s={3} /></DockNav>
              <DockTab $w={62}>Navigator</DockTab>
              <DockTab $w={72} $on>SCH Library</DockTab>
              <DockTab $w={52}>SCHLIB F</DockTab>
            </DockTabs>
          </PanelBody>
        </LeftDock>

        <Center>
          <TabStrip>
            <FirstTab $w={100}><SchDocIcon />lcdKeyboard.SchDoc</FirstTab>
            <DocTab $w={140} $ml={117} $end>Keyboard.SchDoc</DocTab>
            <DocTab $w={110} $on $ml={2}><SchLibIcon />dengx.SchLib *</DocTab>
            <PcbTab $w={90}><PcbIcon />SMD.PCBLIB</PcbTab>
            <PcbTab $w={90}><PcbIcon />new.PCBLIB</PcbTab>
          </TabStrip>
          <CanvasRow>
            <Canvas><CrossV /><CrossH /></Canvas>
            <VBar>
              <ArrowCell><Tri $dir="up" $s={4} /></ArrowCell>
              <VThumb $top={290} $h={24} />
              <Fill />
              <ArrowCell><Tri $s={4} /></ArrowCell>
            </VBar>
            <Chev l={1008} t={34} />
          </CanvasRow>
          <HBarRow>
            <ArrowCell $size={15}><Tri $dir="left" $s={4} /></ArrowCell>
            <HThumb />
            <Fill />
            <ArrowCell $size={15}><Tri $dir="right" $s={4} /></ArrowCell>
          </HBarRow>
          <EditorHead>
            <EditorTitle>Editor</EditorTitle>
            <EditorTools><ToolBtn>Mask Level</ToolBtn><ToolBtn>Clear</ToolBtn></EditorTools>
          </EditorHead>
          <EditorBody>
            <ModelColumn>
              <ModelTable>
                <THead>
                  <TH $w={111}>Model<Sort /></TH><TH $w={99}>Type</TH><TH $w={135}>Location</TH><TH $w={370}>Description</TH>
                </THead>
              </ModelTable>
              <EditorButtons>
                <SplitBtn $w={135}>Add Footprint<SplitArrow><Tri $s={3} /></SplitArrow></SplitBtn>
                <Btn $w={92}><u>R</u>emove</Btn>
                <Btn $w={90}><u>E</u>dit...</Btn>
              </EditorButtons>
            </ModelColumn>
            <PreviewBox>There is no preview available</PreviewBox>
          </EditorBody>
          <Chev l={1008} t={709} />
        </Center>

        <Rail>
          <RailTab $h={56}>Favorites</RailTab>
          <RailTab $h={56}>Clipboard</RailTab>
          <RailTab $h={50}>Libraries</RailTab>
        </Rail>
      </Workspace>

      <StatusBar>
        <StatusCell $w={321} $line>X:-50 Y:50 &nbsp;&nbsp; Grid:10</StatusCell>
        <StatusCell $w={326} $line />
        <PanelBtns>
          <PanelBtn $w={57}><u>S</u>ystem</PanelBtn>
          <PanelBtn $w={98}><u>D</u>esign Compiler</PanelBtn>
          <PanelBtn $w={40}>S<u>C</u>H</PanelBtn>
          <PanelBtn $w={73}><u>I</u>nstruments</PanelBtn>
          <PanelBtn $w={59}>Shortcuts</PanelBtn>
          <PanelBtn $w={19} $ml={3}>&gt;&gt;</PanelBtn>
        </PanelBtns>
      </StatusBar>

      <Taskbar>
        <StartBtn><Win />开始</StartBtn>
        <TaskBtn $ml={10} $w={47}><FoxitPdf /></TaskBtn>
        <TaskBtn $ml={3}><Snail /></TaskBtn>
        <TaskBtn $w={39}><Explorer /></TaskBtn>
        <Stack />
        <TaskBtn $on $ml={2} $w={48}><AltiumA /></TaskBtn>
        <TaskBtn $w={39}><Control /></TaskBtn>
        <Stack />
        <TaskBtn $ml={3} $w={47}><GreenFolder /></TaskBtn>
        <TaskBtn $ml={3} $w={47}><ChromeIcon /></TaskBtn>
        <TaskBtn $ml={3} $w={47}><NotePP /></TaskBtn>
        <TaskBtn $ml={3} $w={47}><VsIcon /></TaskBtn>
        <TaskBtn $ml={3} $w={47}><ToolsIcon /></TaskBtn>
        <TaskBtn $ml={3} $w={47}><HelpIcon /></TaskBtn>
        <TrayLeft>
          <KeyboardIcon /><TrayDiv /><HelpCircle /><TrayDiv /><RestoreIcon />
        </TrayLeft>
        <Tray>
          <svg width="7" height="10" viewBox="0 0 7 10"><path d="M1 4l2.500-3L6 4M1 9l2.500-3L6 9" fill="none" stroke="#000" strokeWidth="1.300" /></svg>
          <RedG /><FlagX /><NetX /><SpeakerX />
          <Clock>13:53<br />2015/7/25</Clock>
          <Desktop />
        </Tray>
      </Taskbar>

      <Menu>
        <Gutter />
        {rows.map((r, i) =>
          r === "sep" ? <MenuSep key={i} /> : (
            <MenuRowItem key={i} $hot={r.hot}>
              {r.icon && <MenuIcon>{r.icon}</MenuIcon>}
              <Under t={r.t} u={r.u} />
              {r.sub && <SubArrow><Tri $dir="right" $s={4} /></SubArrow>}
            </MenuRowItem>
          )
        )}
      </Menu>
      <Scribble width="1280" height="1024" viewBox="0 0 1280 1024">
        <path d={scribble} fill="none" stroke="#ee1c24" strokeWidth="1" />
      </Scribble>
      <Watermark>www.hex55.com</Watermark>
    </Page>
  );
}
